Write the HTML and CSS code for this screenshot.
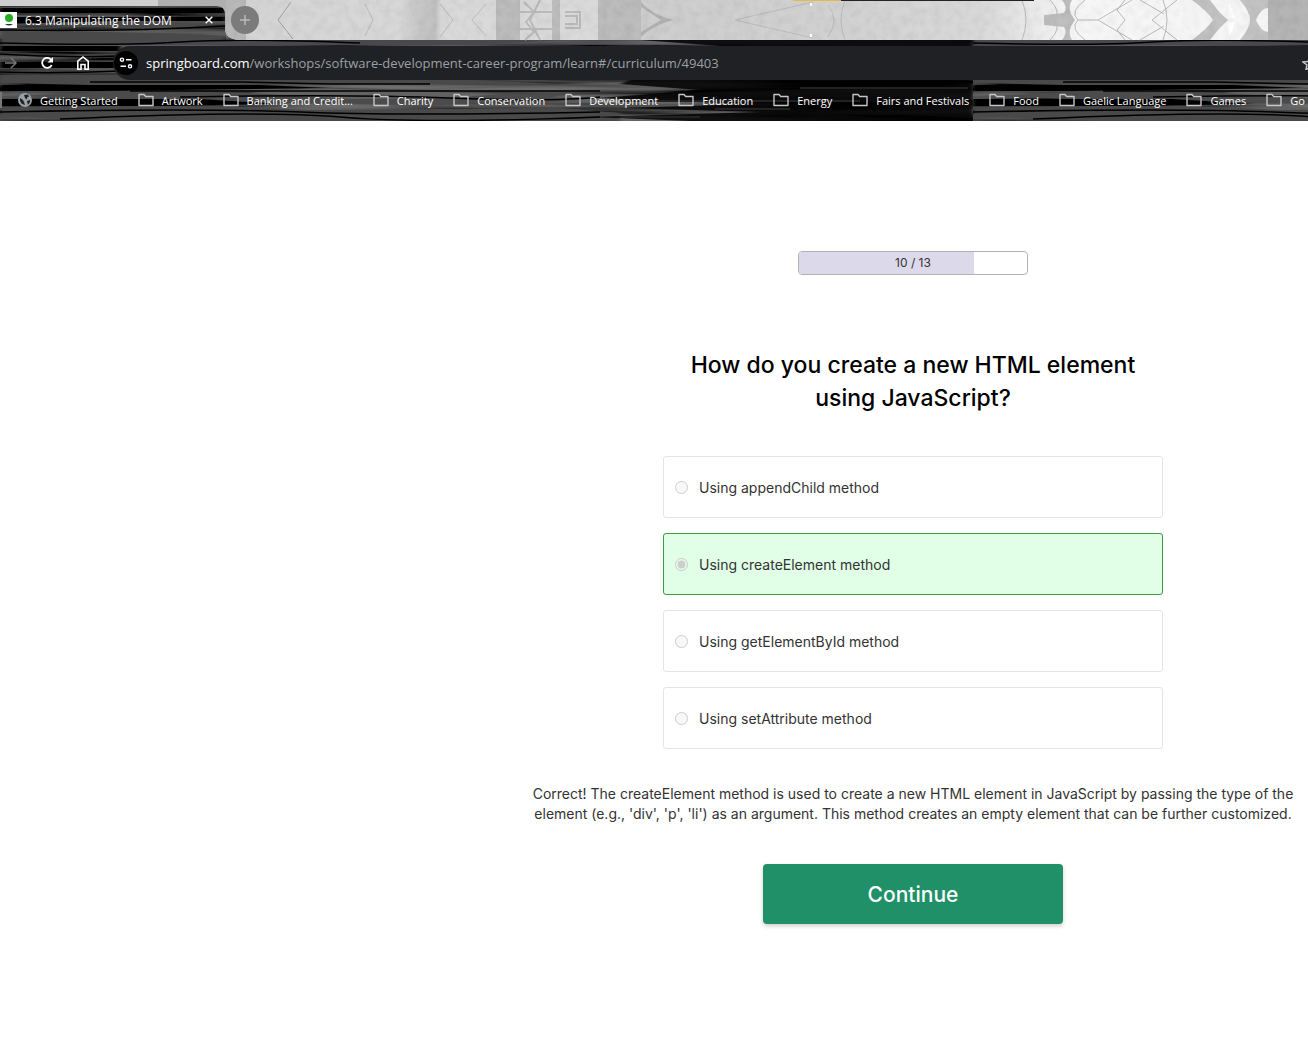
FILE: index.html
```html
<!DOCTYPE html>
<html lang="en">
<head>
<meta charset="utf-8">
<title>6.3 Manipulating the DOM</title>
<link rel="stylesheet" href="styles.css">
</head>
<body>
<svg class="defs" aria-hidden="true">
  <defs>
    <symbol id="folder" viewBox="0 0 16 14"><path d="M1 1.500h5l1.700 2H15v9H1z" fill="none" stroke="#c4c6c9" stroke-width="1.400" stroke-linejoin="round"/></symbol>
    <filter id="fibre" x="0" y="0" width="100%" height="100%">
      <feTurbulence type="fractalNoise" baseFrequency="0.004 0.13" numOctaves="3" seed="8"/>
      <feColorMatrix values="1 0 0 0 -.36  1 0 0 0 -.36  1 0 0 0 -.36  0 0 0 0 1"/>
    </filter>
    <filter id="soft" x="0" y="0" width="100%" height="100%"><feGaussianBlur stdDeviation="2 .5"/></filter>
    <pattern id="wood" width="973" height="121" patternUnits="userSpaceOnUse">
      <rect width="973" height="121" fill="#0a0a0a"/>
      <rect width="973" height="121" filter="url(#fibre)" opacity=".6"/>
      <g filter="url(#soft)">
        <path d="M0 31Q180 32 225 36V40H560L480 45H0zM0 75Q120 73 180 78H430L560 84H270L180 87 0 83zM0 107L200 105 310 110 560 108 620 113V121H120L0 116zM20 25L120 22 225 24 150 29z" fill="#484848"/>
        <path d="M20 96L130 90 250 93 310 87 420 90 560 95 540 100 440 105 300 103 100 99z" fill="#4c4c4c"/>
        <path d="M250 93L310 88 500 94 450 98 350 99z" fill="#626262"/>
        <path d="M0 8H225V13H0zM0 17H225V21H120L0 24zM0 46H120V51H0zM0 62H120V68H0zM0 85H260L330 88 100 91H0zM0 99H200L280 104 170 106H0z" fill="#000"/>
        <path d="M640 40H973V121H690L590 117 760 112 620 108 750 104 600 98 700 90 620 84 720 46z" opacity=".85"/>
      </g>
      <g fill="none" stroke="#000" stroke-width="1.500">
        <path d="M0 30Q120 32 225 26M0 43Q120 46 180 42T360 43M0 54Q60 58 120 56M0 72Q60 74 120 71M90 82H240L330 84H430M130 91H600M180 97Q350 94 450 98T600 97M0 112Q200 108 300 112T600 112M60 119Q260 110 340 117T600 117"/>
      </g>
      <path d="M800 88H968M620 101H860M715 109H790M620 117H700" stroke="#222" stroke-width="2"/>
    </pattern>
    <linearGradient id="mist" gradientUnits="userSpaceOnUse" x1="225" x2="1308" y1="0" y2="0">
      <stop offset="0" stop-color="#cecece"/><stop offset=".16" stop-color="#d2d2d2"/><stop offset=".18" stop-color="#bebebe"/><stop offset=".194" stop-color="#b7b7b7"/>
      <stop offset=".2" stop-color="#d4d4d4"/><stop offset=".34" stop-color="#d4d4d4"/><stop offset=".39" stop-color="#c6c6c6"/><stop offset=".58" stop-color="#cbcbcb"/>
      <stop offset=".7" stop-color="#d3d3d3"/><stop offset=".78" stop-color="#f5f5f5"/><stop offset="1" stop-color="#f5f5f5"/>
    </linearGradient>
    <filter id="grain" x="0" y="0" width="100%" height="100%">
      <feTurbulence type="fractalNoise" baseFrequency=".12" numOctaves="4" seed="5"/>
      <feColorMatrix values="1 0 0 0 .3  1 0 0 0 .3  1 0 0 0 .3  0 0 0 0 .14"/>
    </filter>
  </defs>
</svg>
<header class="browser">
  <svg class="texture" aria-hidden="true">
    <rect width="100%" height="121" fill="url(#wood)"/>
    <path d="M0 0H4000V40H241Q225 40 225 28V14Q225 6 217 6H0z" fill="url(#mist)"/>
    <path d="M158 0H246V40H241Q225 40 225 28V14Q225 6 217 6H158z" fill="#afafaf"/>
    <path d="M496 0H520V40H496zM552 0H560V40H552zM598 0H641V40H598z" fill="#b2b2b2"/>
    <path d="M641 2q10 12 32 18-22 6-32 17v-5l20-12-20-13z" fill="#a6a6a6"/>
    <path d="M1192 0h18q9 13 18 20-9 8-18 20h-18q16-12 21-20-5-8-21-20zM1240 0h28v8q-7 0-12 12 5 12 12 12v8h-28q10-12 10-20t-10-20z" fill="#b9b9b9"/>
    <path d="M1268 0H1308V40H1268z" fill="#a9a9a9"/>
    <path d="M1062 0h10q-4 6-1 14l4 6-4 6q-3 8 1 14h-10q6-7 2-13l-20-2v-10l20-2q4-6-2-13z" fill="#b4b4b4"/>
    <g fill="none" stroke="#b0b0b0">
      <path d="M524 2l10 10-8 10 8 10-9 8M540 0l-10 20 10 20M565 12h15v16h-15M565 16h12v8h-12M520 12h35M520 29h35" stroke-width="2"/>
      <path d="M365 4l8 16-8 16M440 4l13 16-13 17M486 4l-14 16 14 16M735 20l78-18M735 20l78 18M828 5q12 15 0 32M845 0q-8 20 0 40M1022 0q8 20 0 40M1050 0q12 12 4 20 8 8-4 20M1085 0q-16 12-7 20-9 8 7 20M1078 20h20l34-20M1098 20l34 20M1125 0l-8 10 8 10-8 10 8 10M1152 20l25-20M1152 20l25 20M1163 0q8 20 0 40M1140 40l24-14M1140 0l24 14"/>
      <path d="M291 2l-13 18 15 19" stroke="#8f8f8f"/>
    </g>
    <path d="M1229 4q4 5 6 14h-7zM1229 36q4-5 6-14h-7z" fill="#fff"/>
    <path d="M810 3h2v3h-2zM810 34h2v3h-2z" fill="#fff"/>
    <path d="M226 0H4000V40H241Q226 40 226 28z" filter="url(#grain)"/>
    <path d="M793 0H841V1H793z" fill="#e5b94e"/><path d="M841 0H1034V1H841z" fill="#272027"/>
  </svg>
  <div class="tabs">
    <div class="tab">
      <svg width="17" height="16" viewBox="0 0 17 16"><path fill="#fff" d="M0 0h17v16H0z"/><circle cx="9" cy="6" r="4" fill="#27ab22"/><path d="M5 12h8q-4 3-8 0z" fill="#234"/></svg>
      <span class="tab-title">6.3 Manipulating the DOM</span>
      <button class="icon-button" aria-label="Close tab"><svg width="8" height="8" viewBox="0 0 8 8"><path d="M.7.7l6.600 6.600M7.300.7L.7 7.300" stroke="#fff" stroke-width="1.500"/></svg></button>
    </div>
    <button class="icon-button new-tab" aria-label="New tab"><svg width="12" height="12" viewBox="0 0 12 12"><path d="M6 1v10M1 6h10" stroke="#bbb" stroke-width="1.500"/></svg></button>
  </div>
  <div class="toolbar">
    <button class="icon-button" aria-label="Forward"><svg width="12" height="12" viewBox="0 0 12 12"><path d="M0 6h11M6 1l5 5-5 5" fill="none" stroke="#777" stroke-width="1.500"/></svg></button>
    <button class="icon-button" aria-label="Reload"><svg width="12" height="12" viewBox="1 1 12 12"><path d="M11.700 9A5 5 0 1 1 11 3.600L12 5" fill="none" stroke="#fff" stroke-width="1.800"/><path d="M13 1v5.500H7.500z" fill="#fff"/></svg></button>
    <button class="icon-button" aria-label="Home"><svg width="12" height="14" viewBox="1 0 12 14"><path d="M1.800 13.200v-8L7 1l5.200 4.200v8H9V8.500H5v4.700z" fill="none" stroke="#fff" stroke-width="1.600"/></svg></button>
    <div class="address">
      <button class="icon-button site" aria-label="Site information"><svg width="14" height="12" viewBox="0 0 14 12"><g fill="none" stroke="#fff" stroke-width="1.400"><circle cx="3" cy="2.700" r="1.600"/><path d="M7 2.700h5.500M1.500 9.300H7"/><circle cx="11" cy="9.300" r="1.600"/></g></svg></button>
      <p class="url"><b>springboard.com</b>/workshops/software-development-career-program/learn#/curriculum/49403</p>
      <svg class="star" width="6" height="14" viewBox="0 0 6 14"><path d="M8 1.500L6 5.500l-5 .5 4 3-1 4.500 4-2" fill="none" stroke="#c4c6c9" stroke-width="1.500"/></svg>
    </div>
  </div>
  <nav class="bookmarks" aria-label="Bookmarks">
    <a href="#"><svg width="14" height="14" viewBox="0 0 14 14"><circle cx="7" cy="7" r="7" fill="#9aa0a6"/><path d="M2 5l3 2 1 2 1 3-3-1-2-3zM6 2l4-.5 1 2-2 1v2L7 5zM9 8l3-1v2l-2 3z" fill="#222"/></svg>Getting Started</a>
    <a href="#"><svg width="16" height="14"><use href="#folder"/></svg>Artwork</a>
    <a href="#"><svg width="16" height="14"><use href="#folder"/></svg>Banking and Credit...</a>
    <a href="#"><svg width="16" height="14"><use href="#folder"/></svg>Charity</a>
    <a href="#"><svg width="16" height="14"><use href="#folder"/></svg>Conservation</a>
    <a href="#"><svg width="16" height="14"><use href="#folder"/></svg>Development</a>
    <a href="#"><svg width="16" height="14"><use href="#folder"/></svg>Education</a>
    <a href="#"><svg width="16" height="14"><use href="#folder"/></svg>Energy</a>
    <a href="#"><svg width="16" height="14"><use href="#folder"/></svg>Fairs and Festivals</a>
    <a href="#"><svg width="16" height="14"><use href="#folder"/></svg>Food</a>
    <a href="#"><svg width="16" height="14"><use href="#folder"/></svg>Gaelic Language</a>
    <a href="#"><svg width="16" height="14"><use href="#folder"/></svg>Games</a>
    <a href="#"><svg width="16" height="14"><use href="#folder"/></svg>Go</a>
  </nav>
</header>
<main class="quiz">
  <div class="progress"><div class="progress-fill" style="width:76.9%"></div><span class="progress-label">10 / 13</span></div>
  <h1>How do you create a new HTML element using JavaScript?</h1>
  <form class="answers">
    <label class="answer"><input type="radio" name="answer" disabled>Using appendChild method</label>
    <label class="answer correct"><input type="radio" name="answer" checked disabled>Using createElement method</label>
    <label class="answer"><input type="radio" name="answer" disabled>Using getElementById method</label>
    <label class="answer"><input type="radio" name="answer" disabled>Using setAttribute method</label>
  </form>
  <p class="feedback">Correct! The createElement method is used to create a new HTML element in JavaScript by passing the type of the element (e.g., 'div', 'p', 'li') as an argument. This method creates an empty element that can be further customized.</p>
  <button class="continue">Continue</button>
</main>
</body>
</html>
```
FILE: styles.css
```css
* { box-sizing: border-box; }
body { margin: 0; background: #fff; color: #333; font-family: Inter, "Liberation Sans", sans-serif; overflow-x: hidden; }
.defs { position: absolute; width: 0; height: 0; }
.browser { position: relative; overflow: hidden; background: #111; color: #fff; font-family: "Open Sans", "Noto Sans", sans-serif; font-size: 12px; }
.texture { position: absolute; inset: 0; width: 100%; height: 100%; }
.tabs, .toolbar, .bookmarks { position: relative; display: flex; align-items: center; }
.icon-button { display: grid; place-items: center; padding: 0; border: 0; background: none; }
.tabs { height: 40px; gap: 6px; }
.tab { display: flex; align-items: center; width: 225px; gap: 8px; padding-right: 12px; }
.tab-title { flex: 1; white-space: nowrap; }
.new-tab { width: 28px; height: 28px; border-radius: 50%; background: #7b7b7b; }
.toolbar { height: 46px; gap: 24px; padding-left: 5px; }
.toolbar > .icon-button { width: 12px; }
.address { display: flex; flex: 1; align-items: center; height: 34px; gap: 8px; padding-left: 1px; border-radius: 17px 0 0 17px; background: #202124; }
.site { width: 24px; height: 24px; border-radius: 50%; background: #000; }
.url { flex: 1; margin: 0; color: #9aa0a6; font-size: 13px; white-space: nowrap; }
.url b { color: #fff; font-weight: 400; }
.bookmarks { height: 35px; padding: 0 0 7px; gap: 20px; font-size: 11px; }
.bookmarks::before { content: ""; width: 2px; height: 16px; margin-right: -4px; background: #777; }
.bookmarks a { display: flex; flex: none; align-items: center; gap: 8px; color: #fff; text-decoration: none; white-space: nowrap; }
.quiz { display: flex; flex-direction: column; align-items: center; padding: 130px 8px 80px 526px; }
.progress { position: relative; width: 230px; height: 24px; overflow: hidden; border: 1px solid #b3b3b3; border-radius: 4px; }
.progress-fill { height: 100%; background: #dcdaea; }
.progress-label { position: absolute; inset: 0; text-align: center; font-size: 12px; line-height: 22px; }
h1 { max-width: 500px; margin: 74px 0 41px; color: #000; text-align: center; font-size: 23px; font-weight: 500; line-height: 33px; }
.answers { display: grid; width: 100%; max-width: 500px; gap: 15px; }
.answer { display: flex; align-items: center; gap: 11px; height: 62px; padding-left: 11px; border: 1px solid #e5e5e5; border-radius: 3px; font-size: 14px; }
.answer input { width: 13px; height: 13px; margin: 0; }
.correct { border-color: #3d9a42; background: #e0ffe6; }
.feedback { max-width: 774px; margin: 35px 0 40px; text-align: center; font-size: 14px; line-height: 20px; }
.continue { width: 300px; height: 60px; border: 0; border-radius: 4px; background: #1f9067; box-shadow: 0 2px 4px #0003; color: #fff; font: 500 21px Inter, sans-serif; }
```
